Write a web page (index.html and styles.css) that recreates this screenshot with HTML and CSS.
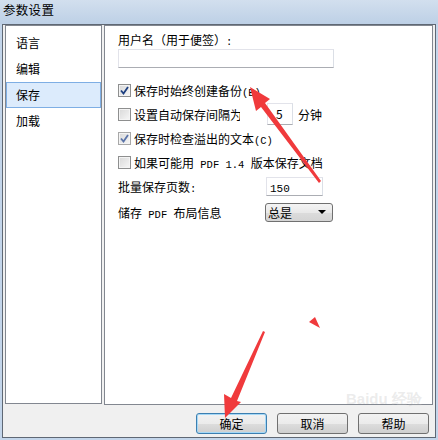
FILE: index.html
```html
<!DOCTYPE html>
<html>
  <head>
    <title>参数设置</title>
    <link rel="stylesheet" href="styles.css">
  </head>
  <body>
    <div class="window">
      <div class="titlebar">参数设置</div>
      <div class="frame">
        <div class="panels">
          <ul class="nav">
            <li>语言</li>
            <li>编辑</li>
            <li class="active">保存</li>
            <li>加载</li>
          </ul>
          <div class="page">
            <div class="label">用户名（用于便签）<span class="lat">:</span></div>
            <div class="textbox user-name"></div>
            <div class="checks">
              <div class="row">
                <span class="cb checked"><svg width="9" height="9" viewBox="0 0 9 9"><path d="M1 4.5 L3.5 7.5 L8 1" fill="none" stroke="#1d3f80" stroke-width="1.8"/></svg></span>
                <span>保存时始终创建备份<span class="lat">(B)</span></span>
              </div>
              <div class="row">
                <span class="cb"></span>
                <span class="clip">设置自动保存间隔为</span>
                <span class="textbox spin">5</span>
                <span class="unit">分钟</span>
              </div>
              <div class="row">
                <span class="cb checked dim"><svg width="9" height="9" viewBox="0 0 9 9"><path d="M1 4.5 L3.5 7.5 L8 1" fill="none" stroke="#5a73a8" stroke-width="1.8"/></svg></span>
                <span>保存时检查溢出的文本<span class="lat">(C)</span></span>
              </div>
              <div class="row">
                <span class="cb"></span>
                <span>如果可能用<span class="lat"> PDF 1.4 </span>版本保存文档</span>
              </div>
            </div>
            <div class="field">
              <span class="field-label">批量保存页数<span class="lat">:</span></span>
              <span class="textbox pages"><span class="lat">150</span></span>
            </div>
            <div class="field tall">
              <span class="field-label">储存<span class="lat"> PDF </span>布局信息</span>
              <span class="select">总是<span class="caret"></span></span>
            </div>
          </div>
        </div>
        <div class="buttons">
          <span class="btn focused">确定</span>
          <span class="btn">取消</span>
          <span class="btn">帮助</span>
        </div>
      </div>
      <div class="watermark">Baidu 经验</div>
      <svg class="marks" width="438" height="440" viewBox="0 0 438 440">
        <polygon points="250,87 270,99 265,103 321,181 319,183 261,107 256,111" fill="#f03a3c"/>
        <polygon points="263,331 265,332 237,401 241,402 225,418 224,394 231,398" fill="#f03a3c"/>
        <polygon points="309,322 315,317 320,328" fill="#f03a3c"/>
      </svg>
    </div>
  </body>
</html>
```

FILE: styles.css
```css
body {
  margin: 0;
  background-color: #c3d5ea;
  font-family: "Noto Sans CJK SC", sans-serif;
  font-size: 12px;
  color: #000;
}

.window {
  position: relative;
  width: 438px;
  height: 440px;
  overflow: hidden;
}

.titlebar {
  height: 24px;
  padding-left: 3px;
  line-height: 20px;
  font-size: 12.5px;
  letter-spacing: 0.3px;
  background: linear-gradient(to bottom, #d2dfee, #bdd0e6);
}

.frame {
  margin: 0 2px;
  width: 432px;
  height: 412px;
  border: 1px solid #5f6874;
  background-color: #f0f0f0;
}

.lat {
  font-family: "Liberation Mono", monospace;
  font-size: 10.5px;
}

/* two panels */
.panels {
  display: flex;
  gap: 2px;
  padding-left: 2px;
}

.nav {
  list-style: none;
  margin: 0;
  padding: 4px 0 0 0;
  width: 95px;
  height: 373px;
  border: 1px solid #828790;
  background-color: #fff;
}

.nav li {
  height: 24px;
  line-height: 24px;
  padding-left: 9px;
  border: 1px solid transparent;
}

.nav li.active {
  background-color: #dcebfc;
  border-color: #7eaee4;
}

.page {
  width: 314px;
  height: 371px;
  padding: 7px 0 0 13px;
  border: 1px solid #828790;
  background-color: #fff;
}

.label {
  height: 14px;
  line-height: 14px;
}

.textbox {
  display: block;
  box-sizing: border-box;
  border: 1px solid #abadb3;
  border-top-color: #e2e3ea;
  border-left-color: #e2e3ea;
  border-right-color: #dbdfe6;
  background-color: #fff;
}

.user-name {
  margin-top: 2px;
  width: 216px;
  height: 19px;
}

.checks {
  margin-top: 10px;
}

.row {
  display: flex;
  align-items: center;
  height: 24px;
}

.cb {
  display: flex;
  align-items: center;
  justify-content: center;
  box-sizing: border-box;
  width: 13px;
  height: 13px;
  margin-right: 3px;
  border: 1px solid #8e8f8f;
  background: linear-gradient(135deg, #d8d8d8, #f7f7f7);
  box-shadow: inset 0 0 0 1px #f4f4f4;
}

.cb.dim {
  border-color: #a8a8a8;
}

.clip {
  width: 106px;
  overflow: hidden;
  white-space: nowrap;
}

.spin {
  margin-left: 27px;
  width: 26px;
  height: 22px;
  line-height: 20px;
  padding-left: 8px;
}

.unit {
  margin-left: 5px;
}

.field {
  display: flex;
  align-items: center;
  height: 25px;
}

.field.tall {
  height: 26px;
}

.field-label {
  width: 148px;
}

.pages {
  width: 57px;
  height: 19px;
  line-height: 17px;
  padding-left: 3px;
  font-size: 12px;
}

.pages .lat {
  font-size: 11px;
}

.select {
  position: relative;
  box-sizing: border-box;
  margin-left: -1px;
  width: 68px;
  height: 19px;
  line-height: 17px;
  padding-left: 2px;
  border: 1px solid #707070;
  border-radius: 3px;
  background: linear-gradient(to bottom, #f4f4f4, #e9e9e9 50%, #dcdcdc 51%, #d4d4d4);
}

.caret {
  position: absolute;
  right: 6px;
  top: 6px;
  border-left: 4px solid transparent;
  border-right: 4px solid transparent;
  border-top: 4px solid #000;
}

/* bottom buttons */
.buttons {
  display: flex;
  justify-content: flex-end;
  gap: 10px;
  margin-top: 8px;
  padding-right: 6px;
}

.btn {
  box-sizing: border-box;
  width: 71px;
  height: 21px;
  line-height: 19px;
  text-align: center;
  border: 1px solid #707070;
  border-radius: 3px;
  background: linear-gradient(to bottom, #f2f2f2, #ebebeb 50%, #dddddd 51%, #cfcfcf);
}

.btn.focused {
  border-color: #3c7fb1;
  box-shadow: inset 0 0 0 1px #a6d8f6;
}

.watermark {
  position: absolute;
  left: 346px;
  top: 391px;
  font-family: "Liberation Sans", sans-serif;
  font-size: 15px;
  font-weight: bold;
  line-height: 16px;
  color: rgba(190, 190, 190, 0.3);
  white-space: nowrap;
}

.marks {
  position: absolute;
  left: 0;
  top: 0;
  pointer-events: none;
}
```
